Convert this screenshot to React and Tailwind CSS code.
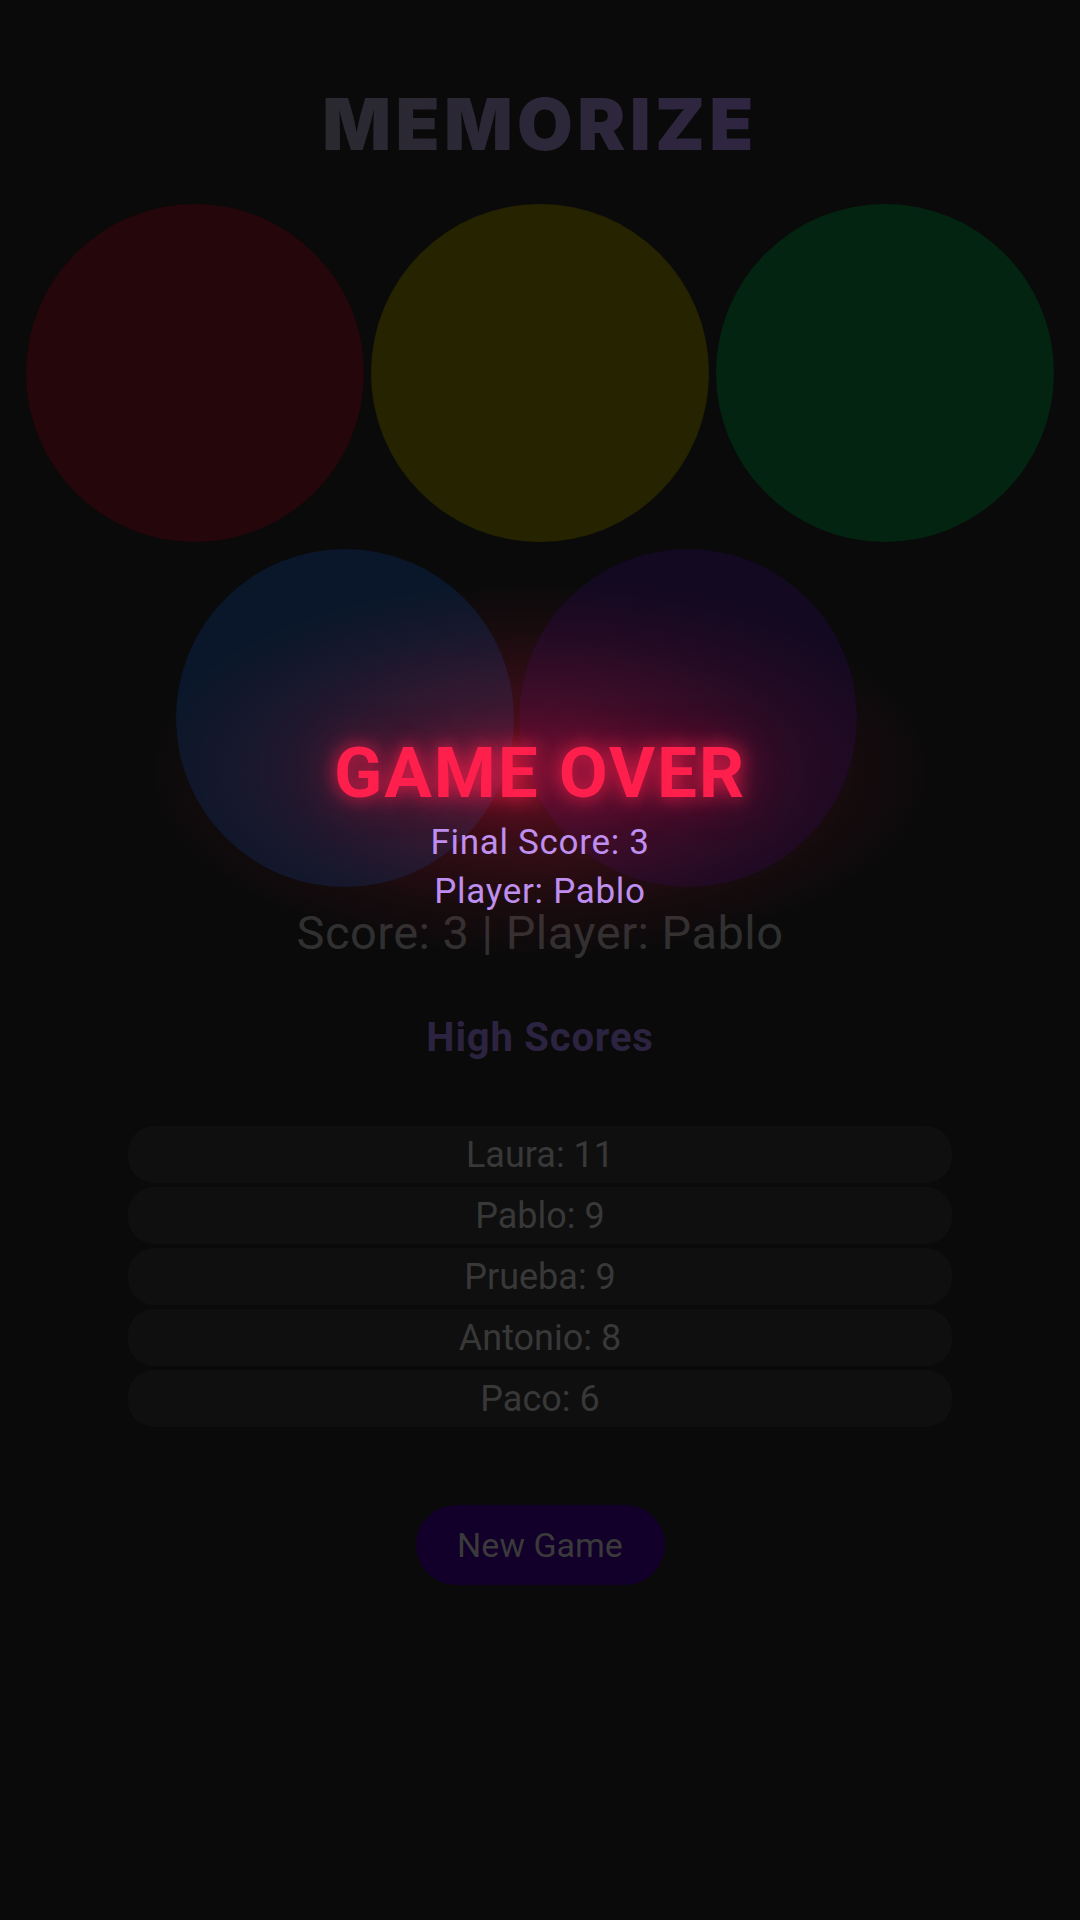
import React from "react";

const scores = [
  ["Laura", 11],
  ["Pablo", 9],
  ["Prueba", 9],
  ["Antonio", 8],
  ["Paco", 6],
];

export default function App() {
  return (
    <div className="relative min-h-[1920px] w-full overflow-hidden bg-[#0a0a0a] [font-family:Roboto,sans-serif]">
      <div className="flex flex-col items-center">
        <h1 className="mt-[88px] h-[72px] text-[72px] leading-none font-black tracking-[0.06em] [font-family:Inter,sans-serif] bg-gradient-to-r from-[#2a2930] to-[#2f2542] bg-clip-text text-transparent">
          MEMORIZE
        </h1>

        <div className="mt-[44px] flex w-full flex-col">
          <div className="flex justify-center gap-[7px]">
            <div className="h-[338px] w-[338px] rounded-full bg-[#25060b]" />
            <div className="h-[338px] w-[338px] rounded-full bg-[#262400]" />
            <div className="h-[338px] w-[338px] rounded-full bg-[#032411]" />
          </div>
          <div className="mt-[7px] flex gap-[5px] pl-[176px]">
            <div className="h-[338px] w-[338px] rounded-full bg-[#0a172a]" />
            <div className="h-[338px] w-[338px] rounded-full bg-[#130920]" />
          </div>
        </div>

        <p className="mt-[22px] h-[47px] text-[47px] leading-none tracking-[0.01em] text-[#303030]">
          Score: 3 | Player: Pablo
        </p>

        <h2 className="mt-[62px] h-[40px] text-[40px] leading-none font-bold tracking-[0.02em] text-[#2c2340]">
          High Scores
        </h2>

        <ul className="mt-[68px] flex w-[824px] flex-col gap-[4px]">
          {scores.map(([name, s]) => (
            <li
              key={name}
              className="flex h-[57px] items-center justify-center rounded-[26px] bg-[#0f0f0f] text-[36px] leading-none text-[#383838]"
            >
              {name}: {s}
            </li>
          ))}
        </ul>

        <button className="mt-[78px] flex h-[80px] w-[249px] items-center justify-center rounded-full bg-[#12002a] text-[34px] leading-none text-[#3a3a3a]">
          New Game
        </button>
      </div>

      {/* Game over overlay */}
      <div className="pointer-events-none absolute left-[140px] top-[580px] h-[380px] w-[800px] bg-[radial-gradient(ellipse_at_center,rgba(255,30,80,0.36)_0%,rgba(255,30,80,0.18)_28%,rgba(255,30,80,0.06)_52%,transparent_70%)]" />
      <div className="absolute left-0 right-0 top-[737px] flex flex-col items-center">
        <div className="h-[71px] text-[71px] leading-none font-bold tracking-[0.025em] text-[#ff1f4d] [text-shadow:0_0_18px_rgba(255,31,77,0.85),0_0_40px_rgba(255,31,77,0.5)]">
          GAME OVER
        </div>
        <div className="mt-[17px] h-[35px] text-[35px] leading-none tracking-[0.02em] text-[#bf8eee]">
          Final Score: 3
        </div>
        <div className="mt-[14px] h-[35px] text-[35px] leading-none tracking-[0.02em] text-[#bf8eee]">
          Player: Pablo
        </div>
      </div>
    </div>
  );
}
